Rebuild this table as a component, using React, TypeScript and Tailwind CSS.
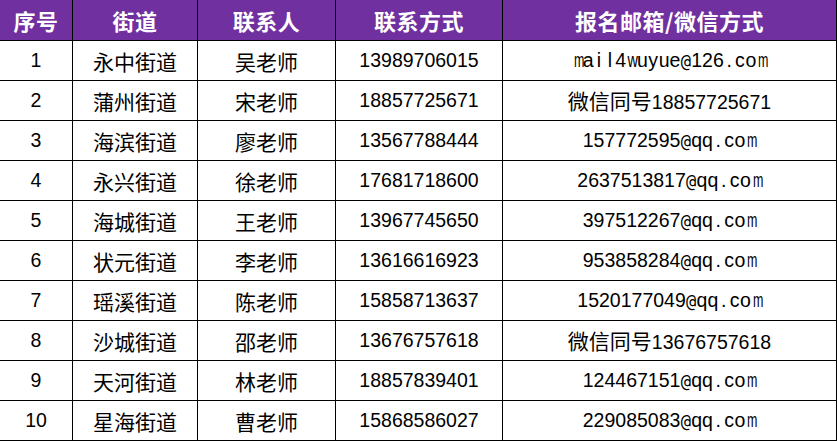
const rows = [
  ['1', '永中街道', '吴老师', '13989706015', 'mail4wuyue@126.com'],
  ['2', '蒲州街道', '宋老师', '18857725671', '微信同号18857725671'],
  ['3', '海滨街道', '廖老师', '13567788444', '157772595@qq.com'],
  ['4', '永兴街道', '徐老师', '17681718600', '2637513817@qq.com'],
  ['5', '海城街道', '王老师', '13967745650', '397512267@qq.com'],
  ['6', '状元街道', '李老师', '13616616923', '953858284@qq.com'],
  ['7', '瑶溪街道', '陈老师', '15858713637', '1520177049@qq.com'],
  ['8', '沙城街道', '邵老师', '13676757618', '微信同号13676757618'],
  ['9', '天河街道', '林老师', '18857839401', '124467151@qq.com'],
  ['10', '星海街道', '曹老师', '15868586027', '229085083@qq.com'],
]

const headers = ['序号', '街道', '联系人', '联系方式', '报名邮箱/微信方式']
const widths = ['w-[73px]', 'w-[125px]', 'w-[138px]', 'w-[167px]', 'w-[334px]']

const cjk = "font-['Noto_Sans_CJK_SC',sans-serif] text-[21px]"
const cell = "inline-block w-[10.85px] text-center"

// half-width cell per latin char, like the sheet's fixed-pitch font;
// wide glyphs get squeezed so they stay inside their cell
function Latin({ ch }: { ch: string }) {
  if (ch === '@') {
    return <span className={`${cell} font-['DejaVu_Sans_Mono',monospace] text-[17px] font-light`}>@</span>
  }
  if (ch === 'm') {
    return <span className={`${cell} font-['Liberation_Sans',sans-serif] text-[19.5px] scale-x-[0.64]`}>m</span>
  }
  if (ch === 'w') {
    return <span className={`${cell} font-['Liberation_Sans',sans-serif] text-[19.5px] scale-x-[0.74]`}>w</span>
  }
  return <span className={`${cell} font-['Liberation_Sans',sans-serif] text-[19.5px]`}>{ch}</span>
}

function MixedText({ text }: { text: string }) {
  const parts = text.match(/[\u4e00-\u9fff]+|[^\u4e00-\u9fff]+/g) || []
  return (
    <span className="whitespace-nowrap">
      {parts.map((p, i) =>
        /[\u4e00-\u9fff]/.test(p) ? (
          <span key={i} className={cjk}>{p}</span>
        ) : (
          p.split('').map((ch, j) => <Latin key={`${i}-${j}`} ch={ch} />)
        )
      )}
    </span>
  )
}

export default function App() {
  return (
    <div className="w-[837px] h-[441px] bg-white text-black overflow-hidden">
      {/* Header */}
      <div className="flex h-[41px] bg-[#7030a0] border-b border-black">
        {headers.map((h, i) => (
          <div
            key={h}
            className={`${widths[i]} border-r border-black flex items-center justify-center text-white font-bold font-['Noto_Sans_CJK_SC',sans-serif] text-[22px] leading-none tracking-[0.5px]`}
          >
            {h}
          </div>
        ))}
      </div>

      {/* Body */}
      {rows.map((r) => (
        <div key={r[0]} className="flex h-[40px] border-b border-black">
          {r.map((c, i) => (
            <div
              key={i}
              className={`${widths[i]} border-r border-black flex items-center justify-center leading-none pt-[1px]`}
            >
              <MixedText text={c} />
            </div>
          ))}
        </div>
      ))}
    </div>
  )
}
